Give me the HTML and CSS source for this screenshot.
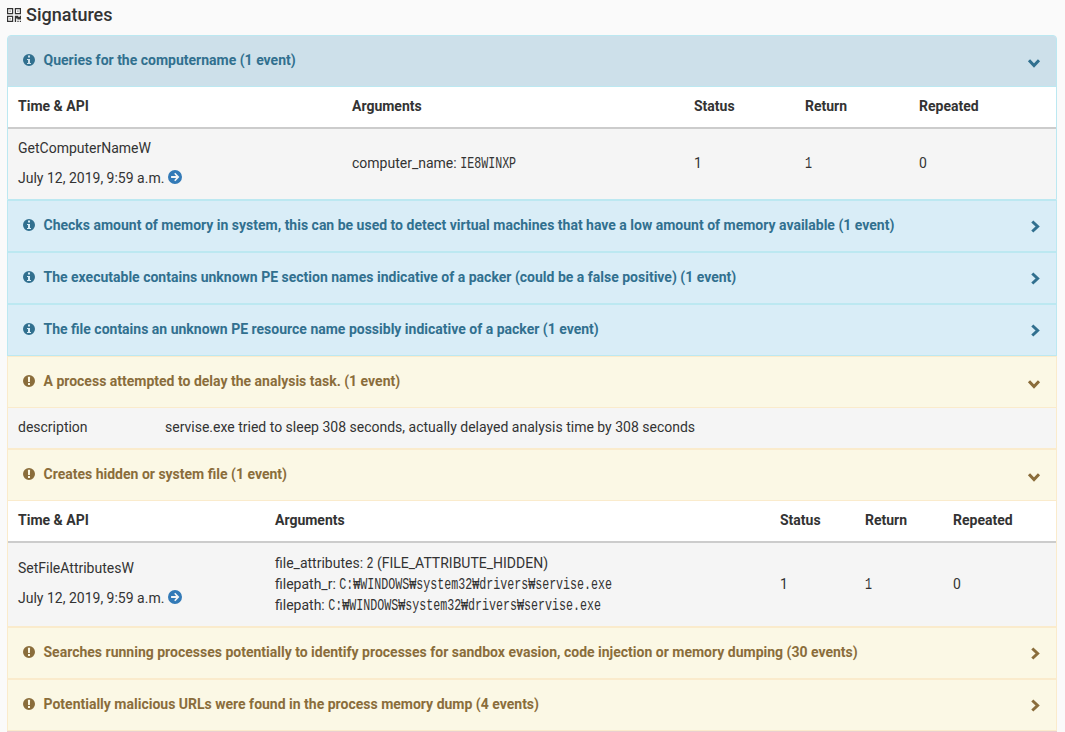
FILE: index.html
```
<!DOCTYPE html>
<html lang="en">
<head>
	<meta charset="UTF-8">
	<title>Signatures</title>
	<link rel="stylesheet" href="styles.css">
</head>
<body>
	<svg class="sprite">
		<symbol id="qrcode" viewBox="0 0 14 14">
			<path fill-rule="evenodd" d="M0 0h6.2v6.2h-6.2zM1.2 1.2v3.8h3.8v-3.8zM7.8 0h6.2v6.2h-6.2zM9 1.2v3.8h3.8v-3.8zM0 7.8h6.2v6.2h-6.2zM1.2 9v3.8h3.8v-3.8zM14 7.8v3.8h-3.6v-1h-1.3v3.4h-1.3v-6.2h3.6v1.2h1.3v-1.2zM10.4 12.8h1.2v1.2h-1.2zM12.8 12.8h1.2v1.2h-1.2z"/>
			<path opacity=".6" d="M2.4 2.4h1.4v1.4h-1.4zM10.2 2.4h1.4v1.4h-1.4zM2.4 10.2h1.4v1.4h-1.4z"/>
		</symbol>
		<symbol id="info" viewBox="0 0 12 12">
			<path fill-rule="evenodd" d="M6 0a6 6 0 1 1 0 12a6 6 0 1 1 0-12zM5 1.5v2h2v-2zM4 5v1h1v3h-1v1h4v-1h-1v-4z"/>
		</symbol>
		<symbol id="warn" viewBox="0 0 12 12">
			<path fill-rule="evenodd" d="M6 0a6 6 0 1 1 0 12a6 6 0 1 1 0-12zM4.9 1.8l.2 5.3h1.8l.2-5.3zM5 8v2h2v-2z"/>
		</symbol>
		<symbol id="go" viewBox="0 0 14 14">
			<path fill-rule="evenodd" d="M7 0a7 7 0 1 1 0 14a7 7 0 1 1 0-14zM6.2 3.8l1.9 2.2h-5v2h5l-1.9 2.2l1.1 1.1l4.1-4.3l-4.1-4.3z"/>
		</symbol>
		<symbol id="chevron" viewBox="0 0 9 13">
			<path d="M1.3 1.5L6.6 6.5L1.3 11.5" fill="none" stroke="currentColor" stroke-width="3"/>
		</symbol>
	</svg>

	<h4 class="title"><svg class="icon-title"><use href="#qrcode"/></svg>Signatures</h4>

	<ul class="signatures">
		<li class="signature info">
			<a class="signature-name active"><svg class="icon"><use href="#info"/></svg>Queries for the computername (1 event)<svg class="chevron down"><use href="#chevron"/></svg></a>
			<table class="calls">
				<colgroup><col style="width: 334px"><col style="width: 342px"><col style="width: 111px"><col style="width: 114px"><col></colgroup>
				<thead>
					<tr><th>Time &amp; API</th><th>Arguments</th><th>Status</th><th>Return</th><th>Repeated</th></tr>
				</thead>
				<tbody>
					<tr>
						<td><p>GetComputerNameW</p><p>July 12, 2019, 9:59 a.m. <svg class="icon-go"><use href="#go"/></svg></p></td>
						<td><div class="arg">computer_name: <span class="mono">IE8WINXP</span></div></td>
						<td>1</td>
						<td><span class="mono">1</span></td>
						<td>0</td>
					</tr>
				</tbody>
			</table>
		</li>
		<li class="signature info">
			<a class="signature-name"><svg class="icon"><use href="#info"/></svg>Checks amount of memory in system, this can be used to detect virtual machines that have a low amount of memory available (1 event)<svg class="chevron"><use href="#chevron"/></svg></a>
		</li>
		<li class="signature info">
			<a class="signature-name"><svg class="icon"><use href="#info"/></svg>The executable contains unknown PE section names indicative of a packer (could be a false positive) (1 event)<svg class="chevron"><use href="#chevron"/></svg></a>
		</li>
		<li class="signature info">
			<a class="signature-name"><svg class="icon"><use href="#info"/></svg>The file contains an unknown PE resource name possibly indicative of a packer (1 event)<svg class="chevron"><use href="#chevron"/></svg></a>
		</li>
		<li class="signature warning">
			<a class="signature-name"><svg class="icon"><use href="#warn"/></svg>A process attempted to delay the analysis task. (1 event)<svg class="chevron down"><use href="#chevron"/></svg></a>
			<table class="calls">
				<colgroup><col style="width: 147px"><col></colgroup>
				<tbody>
					<tr><td>description</td><td>servise.exe tried to sleep 308 seconds, actually delayed analysis time by 308 seconds</td></tr>
				</tbody>
			</table>
		</li>
		<li class="signature warning">
			<a class="signature-name"><svg class="icon"><use href="#warn"/></svg>Creates hidden or system file (1 event)<svg class="chevron down"><use href="#chevron"/></svg></a>
			<table class="calls">
				<colgroup><col style="width: 257px"><col style="width: 505px"><col style="width: 85px"><col style="width: 88px"><col></colgroup>
				<thead>
					<tr><th>Time &amp; API</th><th>Arguments</th><th>Status</th><th>Return</th><th>Repeated</th></tr>
				</thead>
				<tbody>
					<tr>
						<td class="call"><p>SetFileAttributesW</p><p>July 12, 2019, 9:59 a.m. <svg class="icon-go"><use href="#go"/></svg></p></td>
						<td class="args">
							<div class="arg">file_attributes: <span class="mono">2</span> (FILE_ATTRIBUTE_HIDDEN)</div>
							<div class="arg">filepath_r: <span class="mono">C:₩WINDOWS₩system32₩drivers₩servise.exe</span></div>
							<div class="arg">filepath: <span class="mono">C:₩WINDOWS₩system32₩drivers₩servise.exe</span></div>
						</td>
						<td>1</td>
						<td><span class="mono">1</span></td>
						<td>0</td>
					</tr>
				</tbody>
			</table>
		</li>
		<li class="signature warning">
			<a class="signature-name"><svg class="icon"><use href="#warn"/></svg>Searches running processes potentially to identify processes for sandbox evasion, code injection or memory dumping (30 events)<svg class="chevron"><use href="#chevron"/></svg></a>
		</li>
		<li class="signature warning">
			<a class="signature-name"><svg class="icon"><use href="#warn"/></svg>Potentially malicious URLs were found in the process memory dump (4 events)<svg class="chevron"><use href="#chevron"/></svg></a>
		</li>
		<li class="signature danger"></li>
	</ul>
</body>
</html>
```
FILE: styles.css
```
* {
	box-sizing: border-box;
}
body {
	margin: 0;
	height: 732px;
	overflow: hidden;
	background-color: #fafafa;
	color: #333;
	font-family: Roboto, sans-serif;
	font-size: 14px;
	line-height: 20px;
}
p {
	margin: 0 0 10px;
}
p:last-child {
	margin-bottom: 0;
}
.sprite {
	display: none;
}
.title {
	display: flex;
	align-items: center;
	height: 35px;
	margin: 0;
	padding: 0 7px 6px;
	font-size: 18px;
	font-weight: 500;
}
.icon-title {
	width: 14px;
	height: 14px;
	margin-right: 5px;
	fill: #333;
}
.signatures {
	width: 1050px;
	margin: 0 0 0 7px;
	padding: 0;
	list-style: none;
}
.signature {
	border: 1px solid;
	overflow: hidden;
}
.signature:first-child {
	border-radius: 4px 4px 0 0;
}
.signature-name {
	display: flex;
	align-items: center;
	height: 50px;
	padding: 0 16px 2px 15px;
	font-weight: 700;
}
.icon {
	width: 12px;
	height: 12px;
	margin-right: 8.5px;
	fill: currentColor;
}
.chevron {
	width: 9px;
	height: 13px;
	margin: 3px 0 0 auto;
}
.chevron.down {
	transform: translate(-1.5px, 2px) rotate(90deg);
}
.info {
	border-color: #bce8f1;
	background-color: #d9edf7;
}
.info .signature-name {
	color: #31708f;
}
.info .active {
	background-color: #cde0ea;
}
.warning {
	border-color: #faebcc;
	background-color: #fbf8e5;
}
.warning .signature-name {
	color: #8a6d3b;
}
.danger {
	border-color: #ebccd1;
	background-color: #f2dede;
}
.calls {
	width: 100%;
	border-top: 1px solid;
	border-color: inherit;
	border-spacing: 0;
	table-layout: fixed;
	background-color: #fff;
}
.calls th {
	height: 42px;
	padding: 0 10px 2px;
	border-bottom: 2px solid #ccc;
	font-weight: 700;
	text-align: left;
}
.calls td {
	padding: 9px 10px 11px;
	background-color: #f5f5f5;
	vertical-align: middle;
}
.calls .args {
	padding: 10px;
}
.calls .call {
	padding-bottom: 13px;
}
.arg {
	height: 21px;
	line-height: 21px;
	white-space: nowrap;
}
/* narrow, tall terminal lettering on a 7px cell */
.mono {
	display: inline-block;
	font-family: "Liberation Mono", monospace;
	font-size: 11.67px;
	line-height: 1;
	transform: scaleY(1.35);
	transform-origin: 0 80%;
}
.icon-go {
	width: 14px;
	height: 14px;
	fill: #337ab7;
	vertical-align: -1px;
}
```
